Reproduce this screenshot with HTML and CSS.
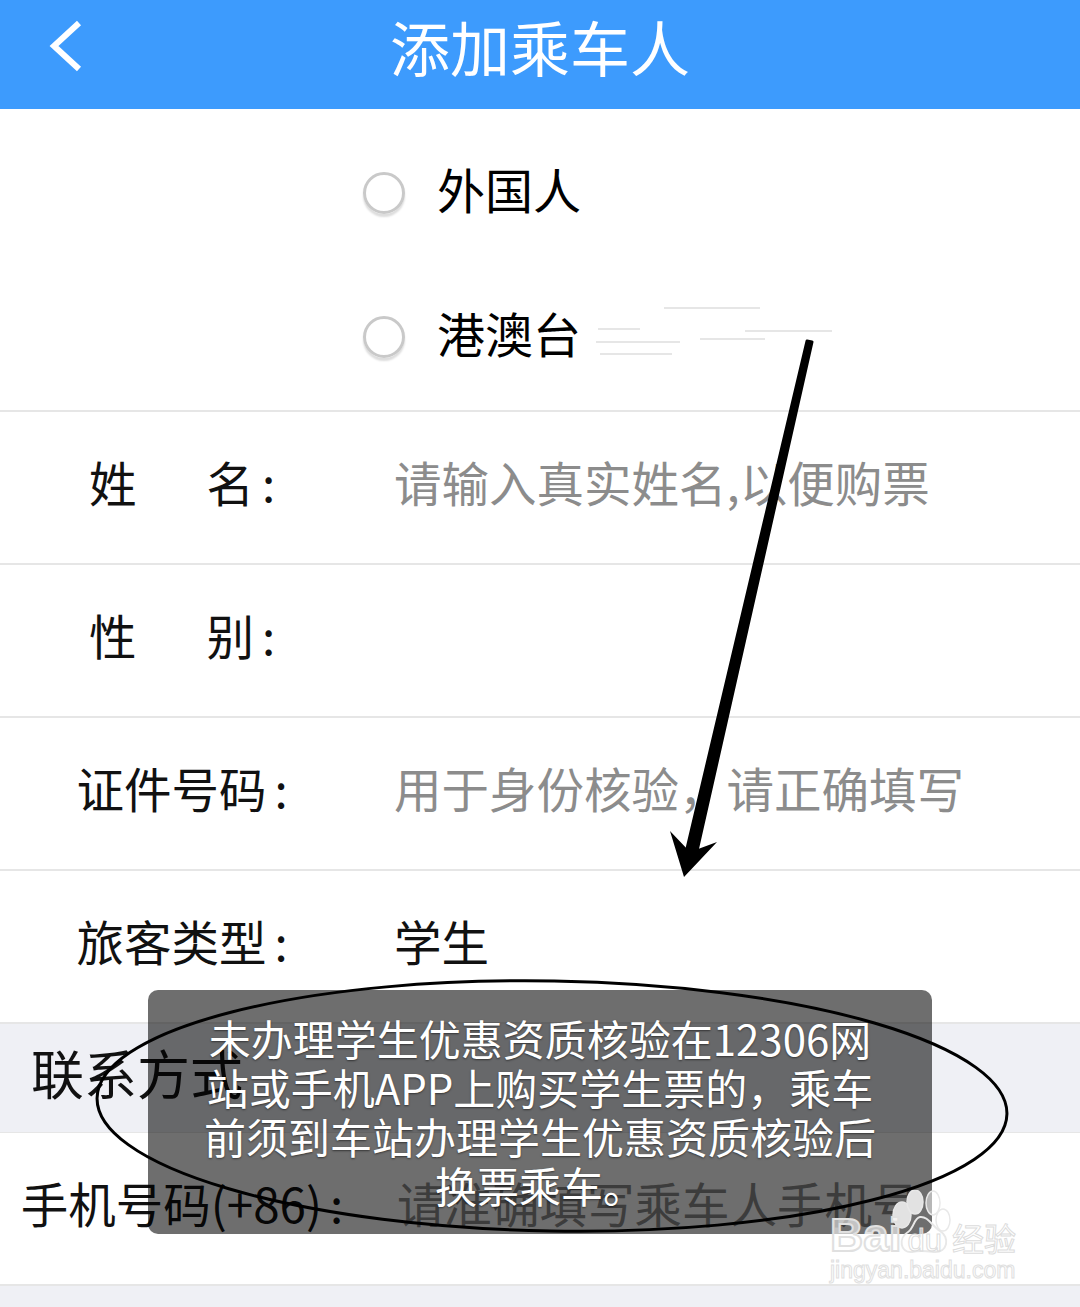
FILE: index.html
```html
<!DOCTYPE html>
<html lang="zh">
<head>
<meta charset="utf-8">
<title>添加乘车人</title>
<link rel="stylesheet" href="styles.css">
</head>
<body>
<div class="page">
	<div class="header">
		<svg class="back" width="40" height="56" viewBox="0 0 40 56"><path d="M33 5 L8 28 L33 51" fill="none" stroke="#fff" stroke-width="6"/></svg>
		<span class="title">添加乘车人</span>
	</div>
	<div class="radios">
		<div class="radio"><i class="dot"></i><span>外国人</span></div>
		<div class="radio"><i class="dot"></i><span>港澳台</span></div>
	</div>
	<div class="row">
		<div class="label"><span class="spread"><span>姓</span><span>名</span></span><span class="colon">:</span></div>
		<div class="hint">请输入真实姓名,以便购票</div>
	</div>
	<div class="row">
		<div class="label"><span class="spread"><span>性</span><span>别</span></span><span class="colon">:</span></div>
	</div>
	<div class="row">
		<div class="label">证件号码<span class="colon">:</span></div>
		<div class="hint">用于身份核验，请正确填写</div>
	</div>
	<div class="row">
		<div class="label">旅客类型<span class="colon">:</span></div>
		<div class="value">学生</div>
	</div>
	<div class="section">联系方式</div>
	<div class="row">
		<div class="label">手机号码(+86)<span class="colon">:</span></div>
		<div class="hint hint-phone">请准确填写乘车人手机号</div>
	</div>
	<div class="foot"></div>

	<div class="toast">未办理学生优惠资质核验在12306网站或手机APP上购买学生票的，乘车前须到车站办理学生优惠资质核验后换票乘车。</div>

	<!-- marks drawn over the screenshot -->
	<svg class="marks" width="1080" height="1307" viewBox="0 0 1080 1307">
		<g class="smear" stroke="#e6e6e6" stroke-width="2" fill="none">
			<path d="M664 308H760"/>
			<path d="M598 329H640M745 331H832"/>
			<path d="M596 342H680M700 339H765"/>
			<path d="M600 354H672"/>
		</g>
		<path d="M807 341L812 342L695 860L685 857Z" fill="#000" stroke="#000" stroke-width="3" stroke-linejoin="round"/>
		<path d="M684 877L670 831L690 852L717 842Z" fill="#000"/>
		<ellipse cx="552" cy="1106" rx="455" ry="125" fill="none" stroke="#000" stroke-width="3" transform="rotate(1 552 1106)"/>
	</svg>

	<div class="mark">
		<svg class="paw" width="70" height="70" viewBox="0 0 70 70">
			<g stroke="#e8e8e8" stroke-width="1.5">
				<ellipse cx="12" cy="25" rx="9" ry="13" fill="#e2e2e2"/>
				<ellipse cx="25" cy="12" rx="8" ry="12" fill="#e2e2e2"/>
				<ellipse cx="43" cy="13" rx="7" ry="12" fill="#fff" fill-opacity=".5"/>
				<ellipse cx="53" cy="30" rx="7" ry="11" fill="none"/>
			</g>
			<path d="M30 27C38 26 42 36 50 41C60 47 58 63 44 62C36 61 30 60 22 62C10 63 8 48 18 42C24 38 24 28 30 27Z" fill="none" stroke="#e8e8e8" stroke-width="2"/>
		</svg>
		<div class="mark-logo"><span>Bai</span><span class="mark-du">du</span><span class="mark-cn">经验</span></div>
		<div class="mark-url">jingyan.baidu.com</div>
	</div>
</div>
</body>
</html>
```

FILE: styles.css
```css
body {
	margin: 0;
	background: #eff0f5;
	font-family: "Noto Sans CJK SC", "Liberation Sans", sans-serif;
}
.page {
	position: relative;
	width: 1080px;
	height: 1307px;
	overflow: hidden;
	background: #eff0f5;
}
.header {
	position: relative;
	height: 109px;
	background: #3d9bfd;
	display: flex;
	align-items: center;
	justify-content: center;
}
.back {
	position: absolute;
	left: 46px;
	top: 18px;
}
.title {
	color: #fff;
	font-size: 60px;
	line-height: 80px;
	margin-bottom: 18px;
}
.radios {
	height: 301px;
	background: #fff;
	border-bottom: 2px solid #e6e6e6;
	padding-left: 363px;
	display: flex;
	flex-direction: column;
	justify-content: center;
	gap: 88px;
}
.radio {
	display: flex;
	align-items: center;
	gap: 32px;
	height: 56px;
	font-size: 48px;
	color: #000;
}
.dot {
	display: block;
	width: 36px;
	height: 36px;
	margin-top: 10px;
	border: 3px solid #c9c9c9;
	border-radius: 50%;
	box-shadow: 0 3px 2px #ddd;
}
.row {
	height: 139px;
	padding-bottom: 12px;
	background: #fff;
	border-bottom: 2px solid #e6e6e6;
	display: flex;
	align-items: center;
	font-size: 47.5px;
}
.label {
	width: 364px;
	flex: none;
	text-align: center;
	color: #111;
}
.spread {
	display: inline-flex;
	gap: 70px;
}
.colon {
	margin-left: 8px;
}
.hint {
	margin-left: 30px;
	color: #8c8c8c;
	white-space: nowrap;
}
.hint-phone {
	margin-left: 33px;
}
.value {
	margin-left: 30px;
	color: #111;
}
.section {
	height: 96px;
	padding: 0 0 12px 31px;
	display: flex;
	align-items: center;
	font-size: 53px;
	color: #111;
	background: #eff0f5;
	border-bottom: 1px solid #e6e6e6;
}
.foot {
	height: 22px;
}
.toast {
	position: absolute;
	left: 148px;
	top: 990px;
	width: 784px;
	height: 244px;
	box-sizing: border-box;
	padding: 23px 52px 0;
	border-radius: 10px;
	background: rgba(0, 0, 0, .57);
	color: #fff;
	font-size: 42px;
	line-height: 49px;
	text-align: center;
	text-shadow: 0 1px 2px rgba(0, 0, 0, .5);
}
.marks {
	position: absolute;
	left: 0;
	top: 0;
}
.smear {
	filter: blur(.7px);
}
.mark {
	position: absolute;
	left: 830px;
	top: 1190px;
	width: 195px;
	height: 95px;
}
.paw {
	position: absolute;
	left: 60px;
	top: 0;
}
.mark-logo {
	position: absolute;
	left: 0;
	top: 20px;
	display: flex;
	align-items: baseline;
	font-family: "Liberation Sans", sans-serif;
	font-size: 46px;
	font-weight: bold;
	line-height: 50px;
	color: rgba(255, 255, 255, .6);
	-webkit-text-stroke: 2px #e0e0e0;
}
.mark-du {
	font-size: 31px;
	margin-left: 6px;
	-webkit-text-stroke: 1px #dcdcdc;
	font-weight: normal;
}
.mark-cn {
	font-family: "Noto Sans CJK SC", sans-serif;
	font-size: 32px;
	font-weight: normal;
	margin-left: 10px;
	-webkit-text-stroke: 1px #dcdcdc;
}
.mark-url {
	position: absolute;
	left: 0;
	top: 67px;
	font-family: "Liberation Sans", sans-serif;
	font-size: 23px;
	line-height: 26px;
	color: #fff;
	-webkit-text-stroke: 1px #e0e0e0;
}
```
